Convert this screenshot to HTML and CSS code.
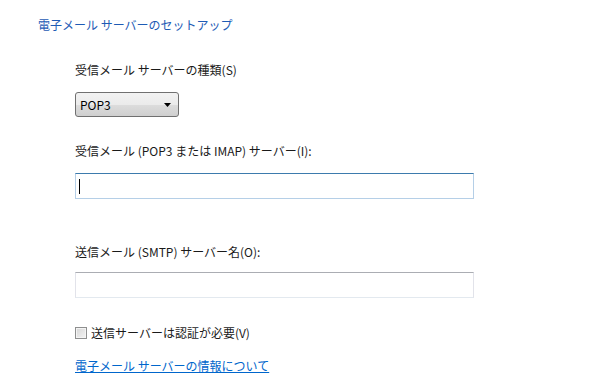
FILE: index.html
```html
<!DOCTYPE html>
<html lang="ja">

<head>
    <meta charset="UTF-8">
    <meta name="viewport" content="width=device-width, initial-scale=1.0">
    <title>電子メール サーバーのセットアップ</title>
    <link rel="stylesheet" href="styles.css">
</head>

<body>
    <div class="setup">
        <h1 class="setup-title">電子メール サーバーのセットアップ</h1>
        <div class="setup-body">
            <div class="field-label label-first">受信メール サーバーの種類(S)</div>
            <div class="dropdown">
                <span class="dropdown-text">POP3</span>
                <svg class="dropdown-arrow" width="7" height="4" viewBox="0 0 7 4">
                    <path d="M0 0h7L3.5 4z" fill="#000"></path>
                </svg>
            </div>

            <div class="field-label">受信メール (POP3 または IMAP) サーバー(I):</div>
            <div class="textbox textbox-focus"><span class="caret"></span></div>

            <div class="field-label label-gap">送信メール (SMTP) サーバー名(O):</div>
            <div class="textbox"></div>

            <label class="check-row">
                <span class="checkbox"></span>
                <span>送信サーバーは認証が必要(V)</span>
            </label>

            <a class="info-link" href="#">電子メール サーバーの情報について</a>
        </div>
    </div>
</body>

</html>
```

FILE: styles.css
```css
* {
    margin: 0;
    padding: 0;
    box-sizing: border-box;
}

body {
    background-color: #fff;
    color: #1a1a1a;
    font-family: "Noto Sans CJK JP", "Noto Sans", sans-serif;
    font-size: 12px;
    line-height: 20px;
}

.setup {
    padding-top: 15px;
    padding-left: 38px;
}

.setup-title {
    font-size: 12px;
    font-weight: normal;
    line-height: 20px;
    color: #1e5bb5;
}

.setup-body {
    padding-left: 37px;
}

.field-label {
    margin-top: 24px;
    margin-bottom: 12px;
}

.label-first {
    margin-top: 25px;
}

.label-gap {
    margin-top: 43px;
    margin-bottom: 10px;
}

/* 下拉框 */
.dropdown {
    width: 104px;
    height: 25px;
    display: flex;
    align-items: center;
    justify-content: space-between;
    padding: 0 7px 0 4px;
    border: 1px solid #707070;
    border-radius: 3px;
    background: linear-gradient(#f2f2f2, #ebebeb 50%, #dddddd 50%, #cfcfcf);
    color: #000;
}

.dropdown-arrow {
    display: block;
}

/* 文本框 */
.textbox {
    width: 399px;
    height: 26px;
    border: 1px solid #e2e3ea;
    border-top-color: #abadb3;
    border-bottom-color: #e3e9ef;
    display: flex;
    align-items: center;
    padding-left: 3px;
}

.textbox-focus {
    border-color: #b5cfe7;
    border-top-color: #3d7bad;
}

.caret {
    width: 1px;
    height: 15px;
    background-color: #000;
}

.check-row {
    display: flex;
    align-items: center;
    gap: 4px;
    margin-top: 25px;
}

.checkbox {
    width: 12px;
    height: 12px;
    border: 1px solid #8e8f8f;
    background: linear-gradient(135deg, #d6d6d6, #f4f4f4);
    box-shadow: inset 0 0 0 1px #f4f4f4;
}

.info-link {
    display: inline-block;
    margin-top: 13px;
    color: #0066cc;
    text-decoration: underline;
}
```
